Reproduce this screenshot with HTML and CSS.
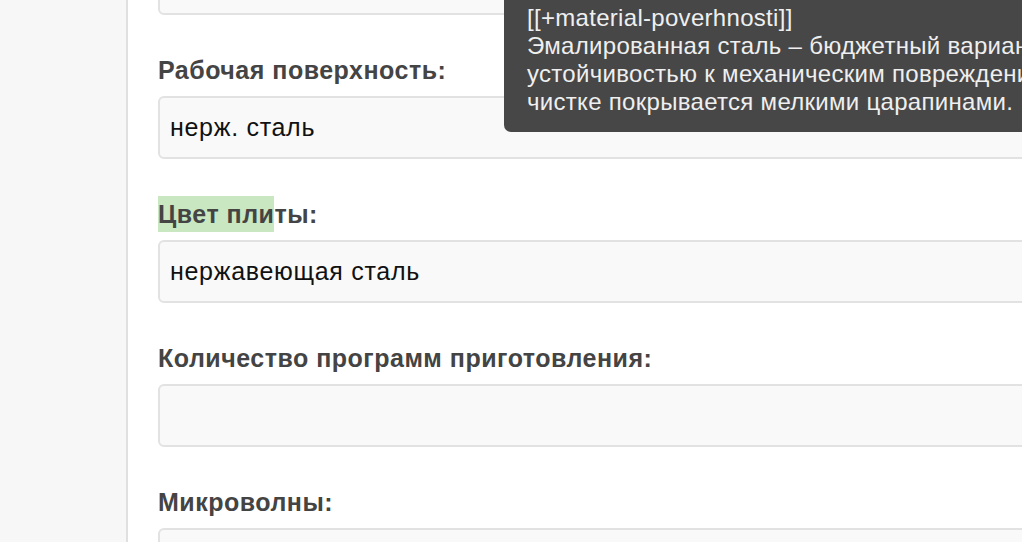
FILE: index.html
```html
<!DOCTYPE html>
<html lang="ru">
<head>
    <meta charset="UTF-8">
    <meta name="viewport" content="width=device-width, initial-scale=1.0">
    <title>Характеристики товара</title>
    <link rel="stylesheet" href="styles.css">
</head>
<body>
    <div class="layout">
        <!-- боковая панель -->
        <aside class="sidebar"></aside>

        <!-- поля характеристик -->
        <main class="fields">
            <div class="field field-first">
                <div class="field-input"></div>
            </div>

            <div class="field">
                <label class="field-label">Рабочая поверхность:</label>
                <div class="field-input">нерж. сталь</div>
            </div>

            <div class="field">
                <label class="field-label"><span class="found">Цвет пли</span>ты:</label>
                <div class="field-input">нержавеющая сталь</div>
            </div>

            <div class="field">
                <label class="field-label">Количество программ приготовления:</label>
                <div class="field-input"></div>
            </div>

            <div class="field">
                <label class="field-label">Микроволны:</label>
                <div class="field-input"></div>
            </div>
        </main>
    </div>

    <!-- подсказка -->
    <div class="tooltip">
        [[+material-poverhnosti]]<br>
        Эмалированная сталь – бюджетный вариант с<br>
        устойчивостью к механическим повреждениям, но при<br>
        чистке покрывается мелкими царапинами.
    </div>
</body>
</html>
```

FILE: styles.css
```css
body {
    margin: 0;
    font-family: "Liberation Sans", Arial, sans-serif;
    background: #fff;
    overflow: hidden;
}

.layout {
    display: flex;
    height: 542px;
    overflow: hidden;
}

.sidebar {
    width: 126px;
    flex-shrink: 0;
    background: #f7f7f7;
    border-right: 2px solid #e0e0e0;
}

.fields {
    padding-left: 30px;
    width: 940px;
    flex-shrink: 0;
}

.field {
    margin-bottom: 37px;
}

.field-first {
    margin-top: -48px;
}

.field-label {
    display: block;
    font-size: 25px;
    font-weight: bold;
    letter-spacing: 0.5px;
    line-height: 36px;
    color: #444;
    margin-bottom: 8px;
}

.found {
    display: inline-block;
    background: #c9e7c1;
}

.field-input {
    box-sizing: border-box;
    height: 63px;
    padding: 0 10px;
    border: 2px solid #e2e2e2;
    border-radius: 6px;
    background: #f9f9f9;
    font-size: 25px;
    letter-spacing: 0.7px;
    line-height: 59px;
    color: #111;
}

.tooltip {
    position: absolute;
    top: -8px;
    left: 504px;
    right: 0;
    padding: 12px 0 16px 23px;
    background: #474747;
    border-radius: 0 0 0 7px;
    color: #efefef;
    font-size: 24px;
    letter-spacing: 0.3px;
    line-height: 28px;
    white-space: nowrap;
    overflow: hidden;
}
```
